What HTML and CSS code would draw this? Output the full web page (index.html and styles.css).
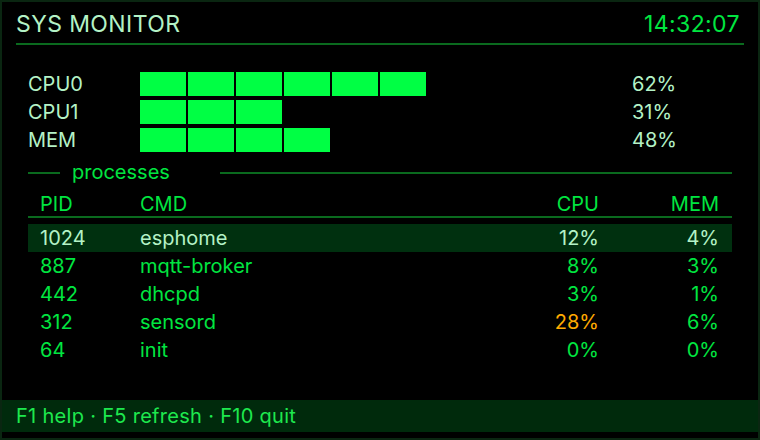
FILE: index.html
```html
<html>
    <head>
        <title>SYS MONITOR</title>
        <link rel="stylesheet" href="styles.css">
    </head>
    <body>
        <div class="ecran">
            <div class="entete">
                <span class="titre">SYS MONITOR</span>
                <span class="heure">14:32:07</span>
            </div>

            <!-- jauges : 10 cases = 100% -->
            <div class="jauges">
                <div class="jauge">
                    <span class="nom">CPU0</span>
                    <div class="barre"><i></i><i></i><i></i><i></i><i></i><i></i></div>
                    <span class="valeur">62%</span>
                </div>
                <div class="jauge">
                    <span class="nom">CPU1</span>
                    <div class="barre"><i></i><i></i><i></i></div>
                    <span class="valeur">31%</span>
                </div>
                <div class="jauge">
                    <span class="nom">MEM</span>
                    <div class="barre"><i></i><i></i><i></i><i></i></div>
                    <span class="valeur">48%</span>
                </div>
            </div>

            <div class="legende">
                <span class="trait court"></span>
                <span class="texte">processes</span>
                <span class="trait"></span>
            </div>

            <div class="tableau">
                <div class="ligne titres">
                    <span>PID</span><span>CMD</span><span class="num">CPU</span><span class="num">MEM</span>
                </div>
                <div class="ligne active">
                    <span>1024</span><span>esphome</span><span class="num">12%</span><span class="num">4%</span>
                </div>
                <div class="ligne">
                    <span>887</span><span>mqtt-broker</span><span class="num">8%</span><span class="num">3%</span>
                </div>
                <div class="ligne">
                    <span>442</span><span>dhcpd</span><span class="num">3%</span><span class="num">1%</span>
                </div>
                <div class="ligne">
                    <span>312</span><span>sensord</span><span class="num alerte">28%</span><span class="num">6%</span>
                </div>
                <div class="ligne">
                    <span>64</span><span>init</span><span class="num">0%</span><span class="num">0%</span>
                </div>
            </div>

            <div class="pied">F1 help · F5 refresh · F10 quit</div>
        </div>
    </body>
</html>
```

FILE: styles.css
```css
*{
    margin: 0;
    padding: 0;
    box-sizing: border-box;
}
body{
    background: #000;
    font-family: Inter, "Liberation Sans", sans-serif;
    font-size: 20px;
    color: #00e640;
}

.ecran{
    width: 760px;
    height: 440px;
    border: 2px solid #0a2611;
    display: flex;
    flex-direction: column;
}

/* barre du haut */
.entete{
    margin: 0 14px;
    padding: 9px 0 5px;
    border-bottom: 2px solid #0a6a1e;
    display: flex;
    justify-content: space-between;
    font-size: 23px;
    line-height: 27px;
    letter-spacing: 0.4px;
}
.titre{
    color: #b4f2c6;
}
.heure{
    color: #00e640;
    padding-right: 4px;
}

/* jauges */
.jauges{
    margin: 27px 0 0 26px;
    display: flex;
    flex-direction: column;
    gap: 4px;
}
.jauge{
    display: grid;
    grid-template-columns: 112px 480px auto;
    height: 24px;
    line-height: 24px;
    color: #b4f2c6;
}
.barre{
    display: flex;
    gap: 2px;
}
.barre i{
    width: 46px;
    height: 24px;
    background: #00ff44;
}
.valeur{
    padding-left: 12px;
}

/* titre de section */
.legende{
    margin: 11px 26px 0 26px;
    height: 20px;
    display: flex;
    align-items: center;
    line-height: 20px;
}
.trait{
    flex: 1;
    height: 2px;
    background: #0a6a1e;
}
.trait.court{
    flex: none;
    width: 32px;
}
.legende .texte{
    width: 160px;
    padding-left: 12px;
    margin-top: -3px;
}

/* liste des processus */
.tableau{
    margin: 0 26px;
}
.ligne{
    display: grid;
    grid-template-columns: 100px 1fr 120px 120px;
    padding: 0 13px 0 12px;
    height: 28px;
    line-height: 28px;
}
.ligne.titres{
    padding-top: 9px;
    height: 35px;
    line-height: 24px;
    border-bottom: 2px solid #0a6a1e;
    margin-bottom: 6px;
}
.ligne.active{
    background: #00300f;
    color: #b4f2c6;
}
.num{
    text-align: right;
}
.alerte{
    color: #ffaa00;
}

.pied{
    margin-top: auto;
    margin-bottom: 6px;
    height: 32px;
    line-height: 32px;
    padding-left: 14px;
    background: #002a0c;
    color: #1ee84e;
    font-size: 20px;
    letter-spacing: 0.3px;
}
```
